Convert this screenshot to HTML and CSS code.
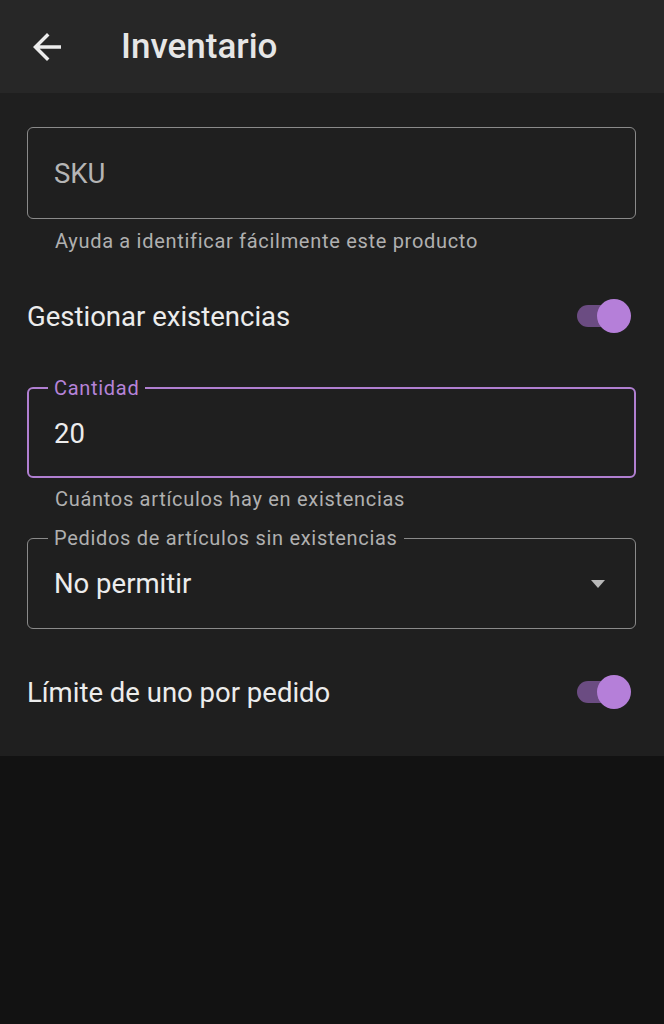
FILE: index.html
```html
<!DOCTYPE html>
<html lang="es">
<head>
  <meta charset="UTF-8" />
  <meta name="viewport" content="width=device-width, initial-scale=1.0" />
  <title>Inventario</title>
  <link rel="stylesheet" href="styles.css">
</head>
<body>
  <header class="app-bar">
    <button class="back-btn" aria-label="Atrás">
      <svg viewBox="0 0 24 24" width="42" height="42">
        <path d="M20 11H7.83l5.59-5.59L12 4l-8 8 8 8 1.41-1.41L7.83 13H20v-2z" fill="currentColor"/>
      </svg>
    </button>
    <h1>Inventario</h1>
  </header>

  <main class="panel">
    <div class="field">
      <span class="placeholder">SKU</span>
    </div>
    <p class="helper">Ayuda a identificar fácilmente este producto</p>

    <div class="switch-row">
      <span>Gestionar existencias</span>
      <span class="switch on"><span class="thumb"></span></span>
    </div>

    <fieldset class="outlined focused">
      <legend>Cantidad</legend>
      <div class="value">20</div>
    </fieldset>
    <p class="helper">Cuántos artículos hay en existencias</p>

    <fieldset class="outlined select">
      <legend>Pedidos de artículos sin existencias</legend>
      <div class="value">
        <span>No permitir</span>
        <svg class="caret" viewBox="0 0 14 8" width="14" height="8">
          <path d="M0 0h14L7 8z" fill="currentColor"/>
        </svg>
      </div>
    </fieldset>

    <div class="switch-row limit">
      <span>Límite de uno por pedido</span>
      <span class="switch on"><span class="thumb"></span></span>
    </div>
  </main>
</body>
</html>
```

FILE: styles.css
```css
body {
  margin: 0;
  background: #121212;
  font-family: Roboto, "Noto Sans", sans-serif;
  color: #e8e8e8;
}
.app-bar {
  height: 93px;
  background: #272727;
  display: flex;
  align-items: center;
  padding-left: 26px;
  box-sizing: border-box;
}
.back-btn {
  width: 42px;
  height: 42px;
  padding: 0;
  border: 0;
  background: none;
  color: #ececec;
  display: flex;
}
.app-bar h1 {
  margin: 0 0 0 53px;
  font-size: 35px;
  font-weight: 500;
  color: #e6e6e6;
}
.panel {
  background: #1f1f1f;
  padding: 34px 28px 40px 27px;
}
.field {
  height: 92px;
  box-sizing: border-box;
  border: 1.5px solid #8a8a8a;
  border-radius: 6px;
  display: flex;
  align-items: center;
  padding-left: 26px;
}
.placeholder {
  font-size: 27.5px;
  color: #b5b5b5;
}
.helper {
  margin: 9px 0 0 28px;
  font-size: 20px;
  line-height: 26px;
  letter-spacing: 0.7px;
  color: #b0b0b0;
}
.switch-row {
  height: 48px;
  margin-top: 38px;
  display: flex;
  align-items: center;
  justify-content: space-between;
  font-size: 27.5px;
  color: #ececec;
}
.switch-row.limit {
  margin-top: 39px;
}
.switch {
  position: relative;
  width: 38px;
  height: 22px;
  margin-right: 21px;
  border-radius: 11px;
  background: #6b4c82;
}
.switch .thumb {
  position: absolute;
  right: -16px;
  top: -6px;
  width: 34px;
  height: 34px;
  border-radius: 50%;
  background: #b57fd9;
}
.outlined {
  margin: 37px 0 0;
  padding: 0 26px;
  border: 1.5px solid #8a8a8a;
  border-radius: 6px;
  min-width: 0;
}
.outlined.focused {
  border: 2.5px solid #b07fd1;
  padding: 0 25px;
}
.outlined legend {
  padding: 0 6px;
  margin-left: -6px;
  font-size: 20px;
  line-height: 22px;
  letter-spacing: 0.7px;
  color: #b0b0b0;
}
.outlined.focused legend {
  color: #b583d8;
}
.outlined .value {
  height: 77px;
  box-sizing: border-box;
  padding-top: 19px;
  line-height: 32px;
  font-size: 27.5px;
  color: #ececec;
}
.outlined.focused + .helper {
  margin-top: 8px;
}
.outlined.select {
  margin-top: 15px;
}
.outlined.select .value {
  height: 79px;
  display: flex;
  align-items: center;
  justify-content: space-between;
  padding: 0 4px 9px 0;
}
.caret {
  color: #b8b8b8;
}
```
